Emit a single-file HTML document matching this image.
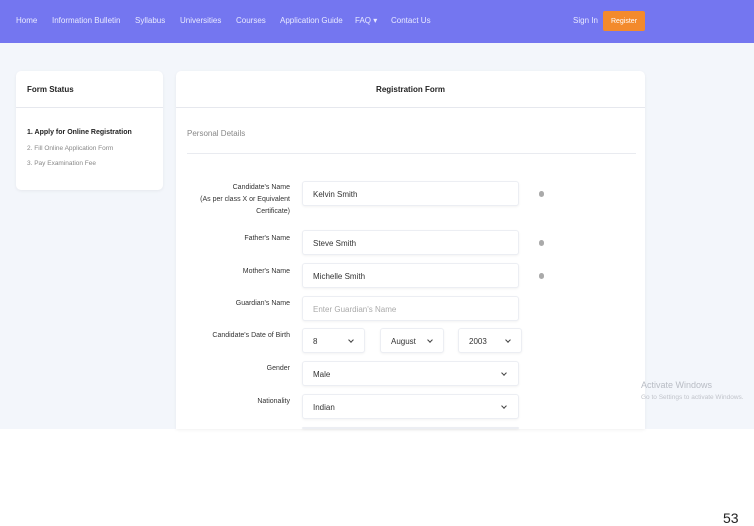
<!DOCTYPE html>
<html><head><style>
*{margin:0;padding:0;box-sizing:border-box}
body{width:754px;height:518px;background:#fff;font-family:"Liberation Sans",sans-serif;position:relative;overflow:hidden}
.page{position:absolute;left:0;top:0;width:754px;height:429px;background:#f3f6fb}
.nav{position:absolute;left:0;top:0;width:754px;height:43px;background:#7476f0}
.nav span{position:absolute;top:16px;font-size:8px;color:#e8e9ff}
.reg{position:absolute;left:603px;top:11px;width:42px;height:20px;background:#f38a2c;border-radius:2px;color:#fff;font-size:7px;text-align:center;line-height:21px}
.card{position:absolute;background:#fff;border-radius:5px;box-shadow:0 1px 3px rgba(0,0,0,.06)}
.t{position:absolute;font-size:8px;color:#222}
.lab{position:absolute;right:464px;font-size:7px;color:#333;text-align:right;line-height:12px}
.in{position:absolute;left:302px;width:217px;height:25px;border:1px solid #eceef3;border-radius:3px;background:#fff;box-shadow:0 1px 2px rgba(0,0,0,.05);font-size:8px;color:#333;padding:8px 10px}
.dot{position:absolute;left:539px;width:5px;height:6px;border-radius:3px;background:#aaa}
.chev{position:absolute;top:9px;width:4px;height:4px;border-right:1px solid #444;border-bottom:1px solid #444;transform:rotate(45deg)}
</style></head><body>
<div class="page"></div>
<div class="nav">
<span style="left:16px">Home</span><span style="left:52px">Information Bulletin</span><span style="left:135px">Syllabus</span><span style="left:180px">Universities</span><span style="left:236px">Courses</span><span style="left:280px">Application Guide</span><span style="left:355px">FAQ ▾</span><span style="left:391px">Contact Us</span><span style="left:573px">Sign In</span>
<div class="reg">Register</div>
</div>
<div class="card" style="left:16px;top:71px;width:147px;height:119px">
<div class="t" style="left:11px;top:14px;font-weight:bold">Form Status</div>
<div style="position:absolute;left:0;top:36px;width:147px;height:1px;background:#e6e8ee"></div>
<div class="t" style="left:11px;top:58px;font-size:7px;font-weight:bold">1. Apply for Online Registration</div>
<div class="t" style="left:11px;top:74px;font-size:6.5px;color:#888">2. Fill Online Application Form</div>
<div class="t" style="left:11px;top:89px;font-size:6.5px;color:#888">3. Pay Examination Fee</div>
</div>
<div class="card" style="left:176px;top:71px;width:469px;height:358px;border-radius:5px 5px 0 0">
<div class="t" style="left:0;width:469px;text-align:center;top:14px;font-weight:bold">Registration Form</div>
<div style="position:absolute;left:0;top:36px;width:469px;height:1px;background:#e6e8ee"></div>
<div class="t" style="left:11px;top:58px;color:#888">Personal Details</div>
<div style="position:absolute;left:11px;top:82px;width:449px;height:1px;background:#e9ebf0"></div>
</div>
<div class="lab" style="top:182px">Candidate's Name<br>(As per class X or Equivalent<br>Certificate)</div>
<div class="in" style="top:181px">Kelvin Smith</div><div class="dot" style="top:191px"></div>
<div class="lab" style="top:233px">Father's Name</div>
<div class="in" style="top:230px">Steve Smith</div><div class="dot" style="top:240px"></div>
<div class="lab" style="top:266px">Mother's Name</div>
<div class="in" style="top:263px">Michelle Smith</div><div class="dot" style="top:273px"></div>
<div class="lab" style="top:298px">Guardian's Name</div>
<div class="in" style="top:296px;color:#aaa">Enter Guardian's Name</div>
<div class="lab" style="top:330px">Candidate's Date of Birth</div>
<div class="in" style="top:328px;width:63px">8<span class="chev" style="left:46px"></span></div>
<div class="in" style="top:328px;left:380px;width:64px">August<span class="chev" style="left:47px"></span></div>
<div class="in" style="top:328px;left:458px;width:64px">2003<span class="chev" style="left:47px"></span></div>
<div class="lab" style="top:363px">Gender</div>
<div class="in" style="top:361px">Male<span class="chev" style="left:199px"></span></div>
<div class="lab" style="top:396px">Nationality</div>
<div class="in" style="top:394px">Indian<span class="chev" style="left:199px"></span></div>
<div class="in" style="top:427px;height:2px;padding:0"></div>
<div style="position:absolute;left:641px;top:380px;font-size:9px;color:#b8bcc4">Activate Windows</div>
<div style="position:absolute;left:641px;top:394px;font-size:6.5px;color:#c0c3ca">Go to Settings to activate Windows.</div>
<div style="position:absolute;left:723px;top:510px;font-size:14px;color:#222">53</div>
</body></html>
